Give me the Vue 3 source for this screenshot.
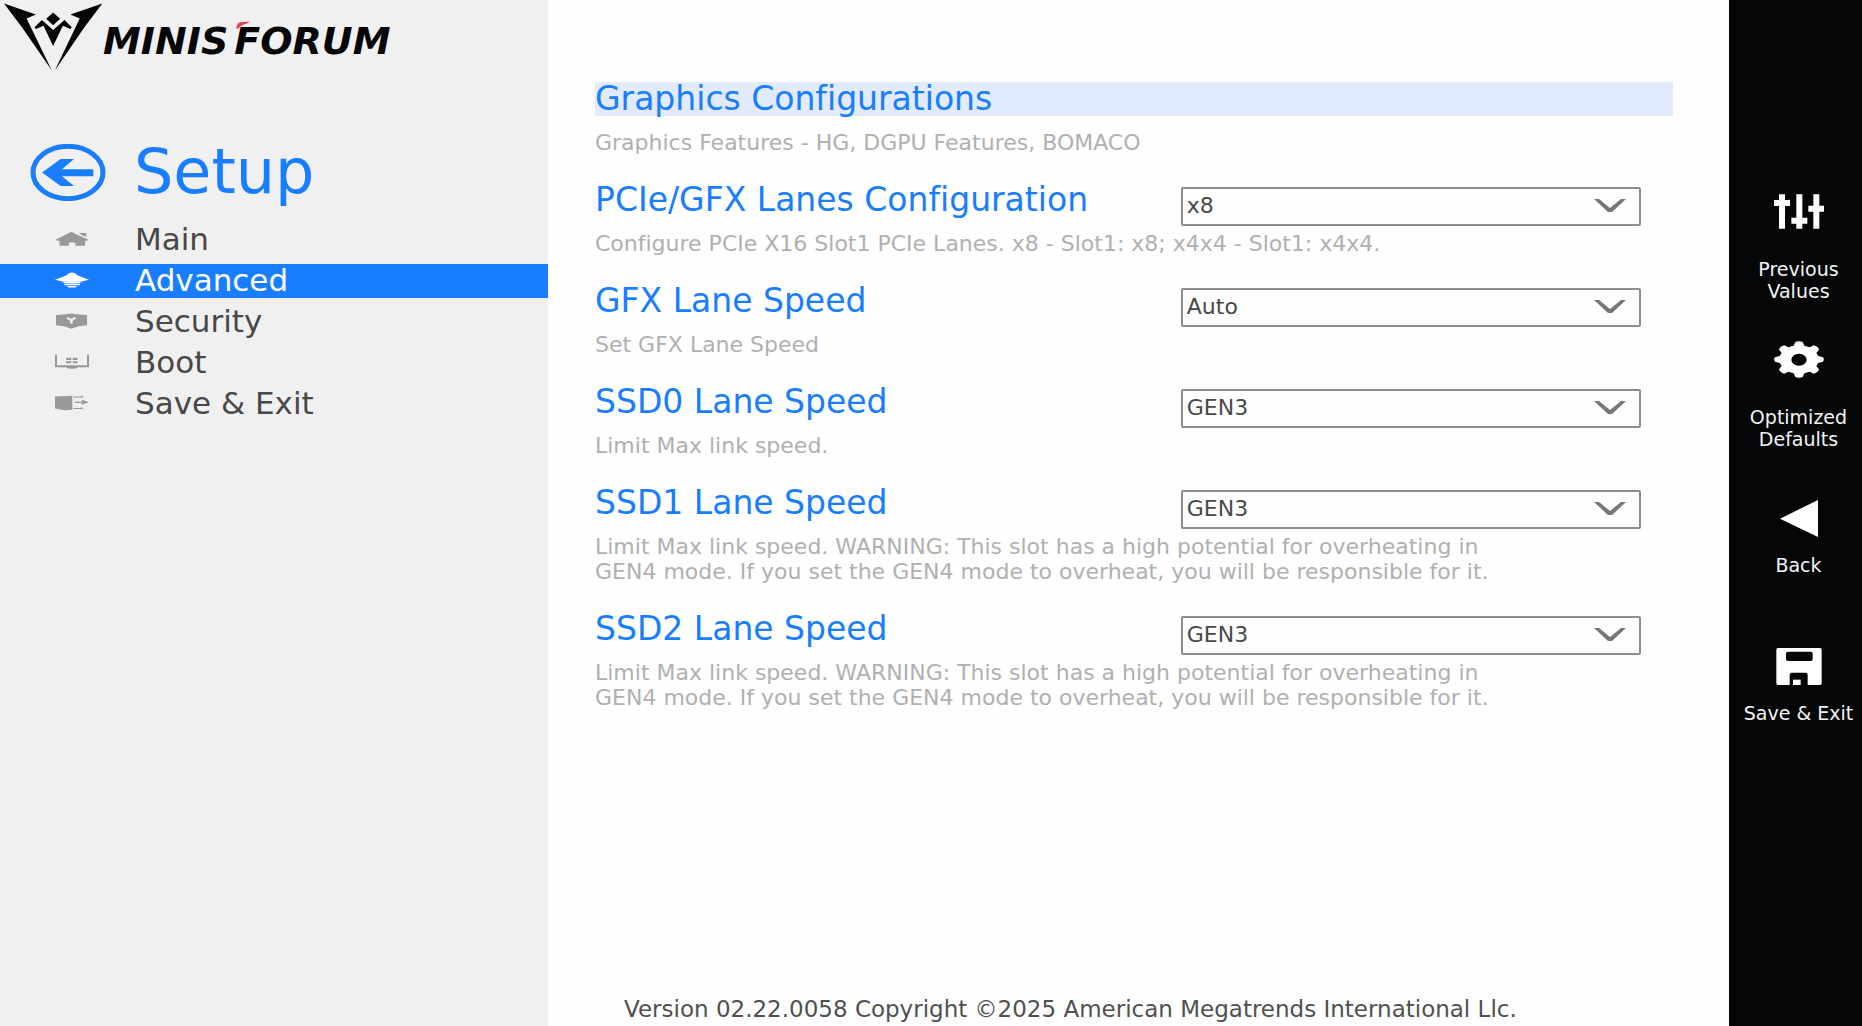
<script setup>
import { ref } from 'vue'

const navItems = [
  { id: 'main', label: 'Main' },
  { id: 'advanced', label: 'Advanced' },
  { id: 'security', label: 'Security' },
  { id: 'boot', label: 'Boot' },
  { id: 'exit', label: 'Save & Exit' },
]
const activeNav = ref('advanced')

const slotWarning =
  'Limit Max link speed. WARNING: This slot has a high potential for overheating in GEN4 mode. If you set the GEN4 mode to overheat, you will be responsible for it.'
const speeds = ['Auto', 'GEN1', 'GEN2', 'GEN3', 'GEN4']

const settings = ref([
  {
    id: 'lanes',
    label: 'PCIe/GFX Lanes Configuration',
    help: 'Configure PCIe X16 Slot1 PCIe Lanes. x8 - Slot1: x8; x4x4 - Slot1: x4x4.',
    options: ['x8', 'x4x4'],
    value: 'x8',
  },
  { id: 'gfx', label: 'GFX Lane Speed', help: 'Set GFX Lane Speed', options: speeds, value: 'Auto' },
  { id: 'ssd0', label: 'SSD0 Lane Speed', help: 'Limit Max link speed.', options: speeds, value: 'GEN3' },
  { id: 'ssd1', label: 'SSD1 Lane Speed', help: slotWarning, options: speeds, value: 'GEN3' },
  { id: 'ssd2', label: 'SSD2 Lane Speed', help: slotWarning, options: speeds, value: 'GEN3' },
])
</script>

<template>
  <div class="setup">
    <aside class="sidebar">
      <div class="brand">
        <svg class="emblem" viewBox="0 0 310 216" aria-hidden="true">
          <path d="M12 10 108 43 80 55 156 212 66 82Z" />
          <path d="M308 10 212 43 240 55 165 212 254 82Z" />
          <path d="M160 37 181 56 160 76 139 56Z" />
          <path d="M104 82 126 60 160 90 194 60 216 82 212 87 189 77 160 138 131 77 108 87Z" />
        </svg>
        <span class="wordmark">
          <span>MINIS</span>
          <span class="second">FORUM
            <svg class="accent" viewBox="0 0 40 20" aria-hidden="true">
              <path d="M0 20 5 7Q7 3 13 2L40 0 31 6 20 9Q12 12 7 20Z" />
            </svg>
          </span>
        </span>
      </div>

      <div class="heading">
        <button class="return" type="button" aria-label="Return">
          <svg viewBox="0 0 228 170" preserveAspectRatio="none" aria-hidden="true">
            <ellipse cx="114" cy="85" rx="105" ry="78" fill="none" stroke="currentColor" stroke-width="15" />
            <path d="M36 85 92 45H132L96 75H190V96H96L132 125H92Z" fill="currentColor" />
          </svg>
        </button>
        <h1>Setup</h1>
      </div>

      <nav>
        <a
          v-for="item in navItems"
          :key="item.id"
          href="#"
          :class="{ active: item.id === activeNav }"
          @click.prevent="activeNav = item.id"
        >
          <svg class="nav-icon" viewBox="0 0 104 48" aria-hidden="true">
            <template v-if="item.id === 'main'">
              <path d="M0 27 50 2 68 11 82 17 104 27 92 30V45H63V37Q51 31 42 37V45H14V30Z" />
              <path d="M73 6H96V17L84 13Z" />
            </template>
            <template v-else-if="item.id === 'advanced'">
              <path d="M0 23 34 10Q42 1 52 1T70 10L104 23 78 29H26Z" />
              <path d="M26 28H78V33H26ZM29 35H76V40H29ZM36 42H68L62 47H42Z" />
            </template>
            <template v-else-if="item.id === 'security'">
              <path
                fill-rule="evenodd"
                d="M3 6Q26 5 50 1 73 5 98 6V37L72 40 50 48 28 40 3 37ZM35 16 46 23V32H54V23L65 16 61 12 50 17 39 12Z"
              />
            </template>
            <template v-else-if="item.id === 'boot'">
              <path d="M0 2H6V34H98V2H104V40H71Q65 45 52 45T33 40H0Z" />
              <path d="M34 11H50V18H34ZM54 11H69V18H54ZM34 22H50V28H34ZM54 22H69V28H54Z" />
            </template>
            <template v-else>
              <path d="M0 4 53 2V45L28 46 0 41Z" />
              <path d="M56 4H80V1L88 5 80 9V7H56ZM56 39H79V36L88 40 79 44V42H56ZM60 20H82V14L104 22 82 29V24H60Z" />
            </template>
          </svg>
          <span>{{ item.label }}</span>
        </a>
      </nav>
    </aside>

    <main class="content">
      <section class="group">
        <h2>Graphics Configurations</h2>
        <p class="help">Graphics Features - HG, DGPU Features, BOMACO</p>
      </section>

      <section v-for="setting in settings" :key="setting.id" class="setting">
        <div class="field">
          <label :for="setting.id">{{ setting.label }}</label>
          <div class="picker">
            <select :id="setting.id" v-model="setting.value">
              <option v-for="option in setting.options" :key="option">{{ option }}</option>
            </select>
            <svg class="chevron" viewBox="0 0 32 14" aria-hidden="true">
              <path d="M0 0H5L16 9 27 0H32L18 13H14Z" fill="currentColor" />
            </svg>
          </div>
        </div>
        <p class="help">{{ setting.help }}</p>
      </section>

      <footer>Version 02.22.0058 Copyright ©2025 American Megatrends International Llc.</footer>
    </main>

    <aside class="rail">
      <button type="button">
        <svg viewBox="0 0 150 111" aria-hidden="true">
          <path d="M15 4H33V21H48V39H33V107H15V39H0V21H15Z" />
          <path d="M67 4H85V74H100V92H85V107H67V92H52V74H67Z" />
          <path d="M118 4H136V38H151V56H136V107H118V56H103V38H118Z" />
        </svg>
        <span>Previous<br>Values</span>
      </button>
      <button type="button">
        <svg viewBox="0 0 150 111" aria-hidden="true">
          <path
            fill-rule="evenodd"
            d="M64 3Q75-1 86 3L91 14 107 19 119 13Q132 16 135 26L127 36 133 45 147 49Q152 55 147 62L133 66 127 75 135 85Q132 95 119 98L107 92 91 97 86 108Q75 112 64 108L59 97 43 92 31 98Q18 95 15 85L23 75 17 66 3 62Q-2 55 3 49L17 45 23 36 15 26Q18 16 31 13L43 19 59 14ZM75 38A23 18 0 1 0 75 74A23 18 0 1 0 75 38Z"
          />
        </svg>
        <span>Optimized<br>Defaults</span>
      </button>
      <button type="button" class="single">
        <svg viewBox="0 0 150 111" aria-hidden="true">
          <path d="M132 0V111L18 56Z" />
        </svg>
        <span>Back</span>
      </button>
      <button type="button" class="single">
        <svg viewBox="0 0 150 111" aria-hidden="true">
          <path
            fill-rule="evenodd"
            d="M12 0H138Q143 0 143 5V106Q143 111 138 111H101V80Q101 74 95 74H53Q47 74 47 80V111H12Q7 111 7 106V5Q7 0 12 0ZM42 11Q36 11 36 17V33Q36 39 42 39H110Q116 39 116 33V17Q116 11 110 11Z"
          />
          <path d="M57 95H80V111H57Z" />
        </svg>
        <span>Save &amp; Exit</span>
      </button>
    </aside>
  </div>
</template>

<style>
body {
  margin: 0;
}
</style>

<style scoped>
.setup {
  display: grid;
  grid-template-columns: minmax(0, 548fr) minmax(0, 1181fr) 133px;
  min-height: 100vh;
  background: #fefefe;
  color: #484848;
  font-family: "DejaVu Sans", "Noto Sans", sans-serif;
  font-variant-ligatures: none;
}

h1,
h2,
p {
  margin: 0;
  font-weight: 400;
}

button {
  padding: 0;
  border: 0;
  background: none;
  color: inherit;
  font: inherit;
  cursor: pointer;
}

.sidebar {
  background: #f0f0f0;
}

.brand {
  display: flex;
  align-items: flex-start;
  color: #050505;
}

.emblem {
  width: 103px;
  height: 72px;
}

.emblem path {
  fill: currentColor;
}

.wordmark {
  display: flex;
  gap: 6px;
  margin-top: 21px;
  font-size: 38px;
  font-style: italic;
  font-weight: 700;
  line-height: 40px;
}

.second {
  position: relative;
}

.accent {
  position: absolute;
  top: 0;
  left: 2px;
  width: 14px;
  height: 8px;
  fill: #e8384f;
}

.heading {
  display: flex;
  align-items: center;
  gap: 28px;
  margin-top: 68px;
  padding-left: 30px;
  color: #197dff;
}

.return {
  display: block;
  width: 76px;
  height: 64px;
}

.return svg {
  display: block;
  width: 76px;
  height: 57px;
}

h1 {
  font-size: 62px;
  line-height: 64px;
}

nav {
  display: flex;
  flex-direction: column;
  gap: 7px;
  margin-top: 19px;
}

nav a {
  display: flex;
  align-items: center;
  gap: 46px;
  box-sizing: border-box;
  height: 34px;
  padding: 0 0 2px 55px;
  color: #484848;
  font-size: 31px;
  line-height: 32px;
  text-decoration: none;
}

nav a.active {
  background: #197dff;
  color: #fff;
}

.nav-icon {
  width: 34px;
  height: 16px;
  fill: #999;
}

.active .nav-icon {
  fill: #fff;
}

.content {
  display: flex;
  flex-direction: column;
  gap: 28px;
  padding: 82px 56px 0 47px;
}

h2,
label {
  color: #197dff;
  font-size: 33px;
  line-height: 34px;
}

h2 {
  background: #e2eafd;
}

.help {
  max-width: 940px;
  margin-top: 14px;
  color: #b0b0b0;
  font-size: 22px;
  line-height: 25px;
}

.field {
  display: flex;
  justify-content: space-between;
  height: 34px;
  padding-right: 32px;
}

.picker {
  position: relative;
  width: 44%;
  margin-top: 4px;
}

select {
  display: block;
  box-sizing: border-box;
  width: 100%;
  height: 39px;
  padding: 0 48px 2px 4px;
  border: 2px solid #8c8c8c;
  border-radius: 2px;
  background: #fefefe;
  color: #484848;
  font: 22px "DejaVu Sans", "Noto Sans", sans-serif;
  appearance: none;
}

.chevron {
  position: absolute;
  top: 12px;
  right: 15px;
  width: 32px;
  height: 14px;
  color: #777;
  pointer-events: none;
}

footer {
  margin-top: auto;
  padding: 0 0 4px 29px;
  color: #505050;
  font-size: 23px;
  line-height: 26px;
}

.rail {
  display: flex;
  flex-direction: column;
  padding-top: 193px;
  background: #050608;
  color: #f4f4f4;
}

.rail button {
  display: flex;
  flex-direction: column;
  align-items: center;
  gap: 28px;
  box-sizing: border-box;
  height: 148px;
  padding-left: 6px;
  font-size: 19px;
  line-height: 22px;
  white-space: nowrap;
}

.rail button.single {
  gap: 17px;
  padding-top: 11px;
}

.rail svg {
  width: 50px;
  height: 37px;
  fill: #fff;
}
</style>
